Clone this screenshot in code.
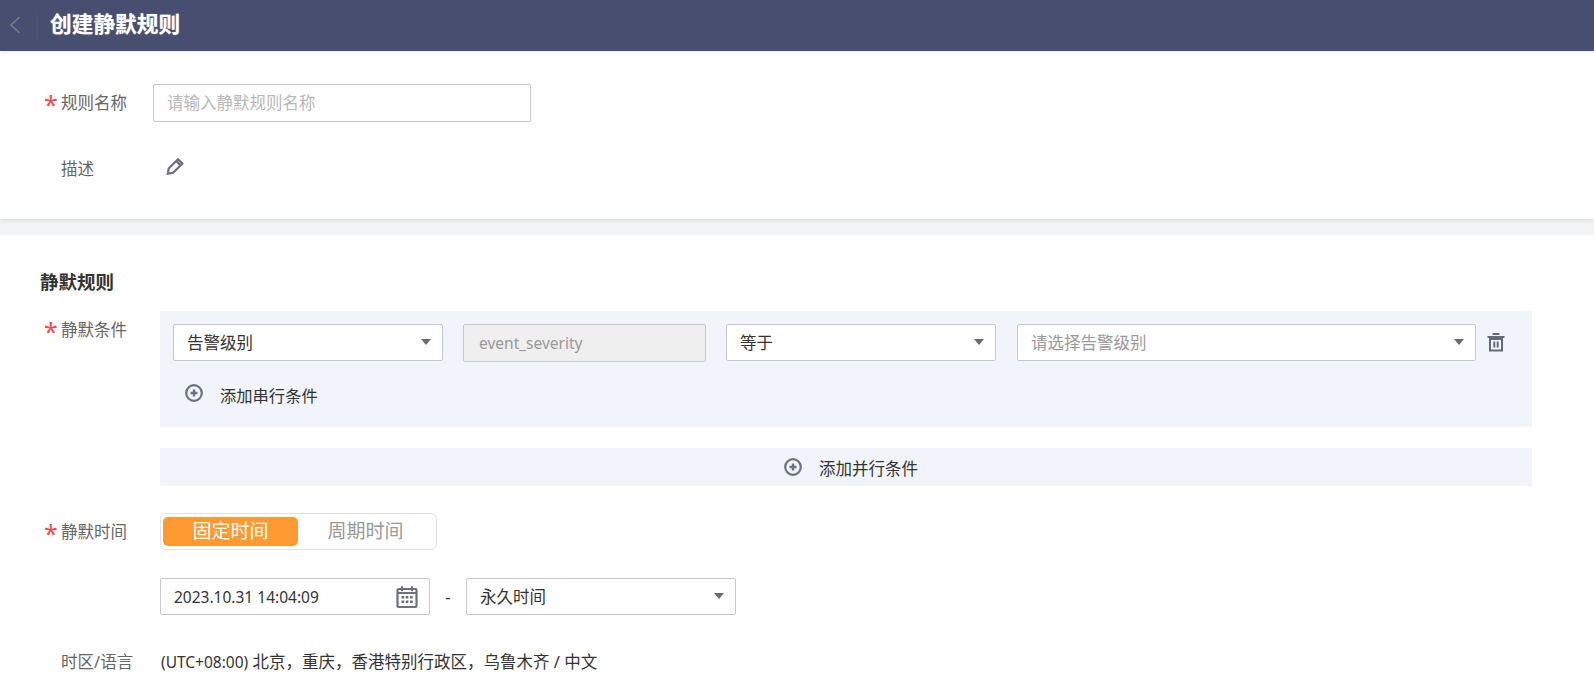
<script>
  const caret = true;
</script>

<div class="page">
  <header class="topbar">
    <button class="back" aria-label="返回">
      <svg width="14" height="20" viewBox="0 0 14 20"><path d="M11.500 2 3 10l8.500 8" fill="none" stroke="#7b7c84" stroke-width="1.600"/></svg>
    </button>
    <h1>创建静默规则</h1>
  </header>

  <section class="card top">
    <div class="row name-row">
      <span class="label req">规则名称</span>
      <div class="input placeholder wide">请输入静默规则名称</div>
    </div>
    <div class="row desc-row">
      <span class="label">描述</span>
      <svg class="pencil" width="20" height="20" viewBox="0 0 20 20"><path d="M2.800 17.600l.9-5L13 3.200l4.400 4.300-9.200 9.300zM11.200 5l4.400 4.400" fill="none" stroke="#6c7080" stroke-width="2.200"/></svg>
    </div>
  </section>

  <section class="card rules">
    <h2>静默规则</h2>

    <div class="row cond-row">
      <span class="label req">静默条件</span>
      <div class="cond-col">
        <div class="panel">
          <div class="cond-line">
            <div class="select s1">告警级别<i class="caret"></i></div>
            <div class="input disabled s2"><span class="latin">event_severity</span></div>
            <div class="select s1">等于<i class="caret"></i></div>
            <div class="select s4 placeholder2">请选择告警级别<i class="caret"></i></div>
            <svg class="trash" width="20" height="20" viewBox="0 0 20 20"><path d="M6.500 1h7v2h-7zM1.500 4h17v2h-17zM3 6h14v13.500H3zM5 8v9.500h10V8zM7.300 9.500h2v6h-2zM10.700 9.500h2v6h-2z" fill="#666a78" fill-rule="evenodd"/></svg>
          </div>
          <div class="add serial">
            <svg class="plus" width="18" height="18" viewBox="0 0 18 18"><circle cx="9" cy="9" r="7.800" fill="none" stroke="#6c7080" stroke-width="2.200"/><path d="M9 5.500v7M5.500 9h7" stroke="#6c7080" stroke-width="2.400"/></svg>
            <span>添加串行条件</span>
          </div>
        </div>
        <div class="add parallel">
          <svg class="plus" width="18" height="18" viewBox="0 0 18 18"><circle cx="9" cy="9" r="7.800" fill="none" stroke="#6c7080" stroke-width="2.200"/><path d="M9 5.500v7M5.500 9h7" stroke="#6c7080" stroke-width="2.400"/></svg>
          <span>添加并行条件</span>
        </div>
      </div>
    </div>

    <div class="row time-row">
      <span class="label req">静默时间</span>
      <div class="toggle">
        <span class="opt active">固定时间</span>
        <span class="opt">周期时间</span>
      </div>
    </div>

    <div class="row date-row">
      <span class="label"></span>
      <div class="input date">
        <span class="latin">2023.10.31 14:04:09</span>
        <svg class="cal" width="24" height="24" viewBox="0 0 24 24"><rect x="2.500" y="4" width="19" height="18" rx="1" fill="none" stroke="#6c7080" stroke-width="2.200"/><path d="M2.500 8h19" stroke="#6c7080" stroke-width="2"/><path d="M7 1.200v5M17 1.200v5" stroke="#6c7080" stroke-width="2"/><path d="M6.500 11h2.700v2.400H6.500zM10.700 11h2.700v2.400h-2.700zM15 11h2.700v2.400H15zM6.500 15.500h2.700v2.400H6.500zM10.700 15.500h2.700v2.400h-2.700zM15 15.500h2.700v2.400H15z" fill="#6c7080"/></svg>
      </div>
      <span class="dash">-</span>
      <div class="select s1">永久时间<i class="caret"></i></div>
    </div>

    <div class="row tz-row">
      <span class="label">时区/语言</span>
      <span class="tz"><span class="latin">(UTC+08:00)</span> 北京&#65292;重庆&#65292;香港特别行政区&#65292;乌鲁木齐 / 中文</span>
    </div>
  </section>
</div>

<style>
  :global(body) {
    margin: 0;
    background: #fff;
    overflow: hidden;
  }
  .page {
    font-family: "Noto Sans", "Noto Sans CJK SC", sans-serif;
    font-size: 16.500px;
    color: #333;
    line-height: 24px;
    height: 700px;
    overflow: hidden;
    background: #f3f4f6;
  }
  .latin { font-size: 15.500px; }
  .topbar {
    height: 51px;
    background: #484e70;
    display: flex;
    align-items: center;
    position: relative;
    z-index: 1;
    box-shadow: 0 1px 3px rgba(0, 0, 0, 0.1);
  }
  .back {
    width: 36px;
    height: 30px;
    padding: 0 0 0 8px;
    border: 0;
    background: none;
    display: flex;
    align-items: center;
    box-shadow: 1px 0 0 #4f5372;
    margin-top: -2px;
  }
  h1 {
    margin: -4px 0 0 14px;
    font-size: 21.700px;
    font-weight: 700;
    color: #fff;
    line-height: 28px;
    text-shadow: 0 0 1px rgba(255, 255, 255, 0.6);
  }
  .card { background: #fff; }
  .top {
    height: 168px;
    padding-top: 33px;
    box-sizing: border-box;
    box-shadow: 0 1px 5px rgba(0, 0, 0, 0.13);
  }
  .rules {
    margin-top: 16px;
    height: 465px;
    padding-top: 35px;
    box-sizing: border-box;
  }
  h2 {
    margin: 0 0 0 40px;
    font-size: 18.500px;
    font-weight: 700;
    line-height: 24px;
    color: #333;
  }
  .row {
    display: flex;
    padding-left: 61px;
    align-items: center;
  }
  .label {
    width: 92px;
    flex: none;
    color: #666;
    position: relative;
  }
  .req::before {
    content: "*";
    position: absolute;
    left: -17px;
    top: -2px;
    color: #f5484f;
    font-size: 25px;
    line-height: 30px;
  }
  .input, .select {
    height: 37px;
    box-sizing: border-box;
    border: 1px solid #c8c8c8;
    border-radius: 2px;
    background: #fff;
    display: flex;
    align-items: center;
    padding: 0 13px;
    position: relative;
    flex: none;
  }
  .wide { width: 378px; height: 38px; }
  .placeholder { color: #b8b8b8; }
  .placeholder2 { color: #999; }
  .desc-row { margin-top: 35px; }
  .pencil { margin-left: 12px; margin-top: -6px; }
  .cond-row {
    align-items: flex-start;
    margin-top: 17px;
  }
  .cond-row .label { width: 99px; margin-top: 7px; }
  .cond-col { width: 1372px; }
  .panel {
    height: 116px;
    background: #f1f5fb;
    padding: 13px 0 0 13px;
    box-sizing: border-box;
  }
  .cond-line {
    display: flex;
    align-items: flex-start;
    gap: 20px;
    height: 37px;
  }
  .s1 { width: 270px; }
  .s2 { width: 243px; }
  .s4 { width: 459px; margin-left: 1px; }
  .disabled {
    background: #efefef;
    color: #999;
    height: 38px;
    padding-left: 15px;
  }
  .caret {
    position: absolute;
    right: 11px;
    top: 14px;
    border-left: 5.500px solid transparent;
    border-right: 5.500px solid transparent;
    border-top: 6.500px solid #6b6b6b;
  }
  .trash { margin: 8px 0 0 -10px; }
  .add {
    display: flex;
    align-items: center;
  }
  .serial {
    margin: 23px 0 0 12px;
    gap: 17px;
  }
  .serial span { font-size: 16.300px; }
  .plus { margin-top: -6px; }
  .parallel {
    margin-top: 21px;
    height: 38px;
    box-sizing: border-box;
    padding: 4px 0 0 10px;
    background: #f1f5fb;
    justify-content: center;
    gap: 17px;
  }
  .parallel .plus { margin-top: -4px; }
  .time-row {
    margin-top: 27px;
  }
  .time-row .label { width: 99px; margin-top: 1px; }
  .toggle {
    width: 277px;
    height: 37px;
    box-sizing: border-box;
    border: 1px solid #e2e2e2;
    border-radius: 6px;
    padding: 3px 2px;
    display: flex;
  }
  .opt {
    width: 135px;
    font-size: 19px;
    text-align: center;
    border-radius: 5px;
    color: #999;
    line-height: 28px;
  }
  .active {
    background: #ff9a33;
    color: #fff;
  }
  .date-row { margin-top: 28px; }
  .date-row .label { width: 99px; }
  .date {
    width: 270px;
    padding-left: 13px;
  }
  .cal { position: absolute; right: 10px; top: 6px; }
  .dash { width: 36px; text-align: center; }
  .tz-row { margin-top: 35px; }
  .tz-row .label { width: 100px; }
  .tz { color: #333; }
</style>
